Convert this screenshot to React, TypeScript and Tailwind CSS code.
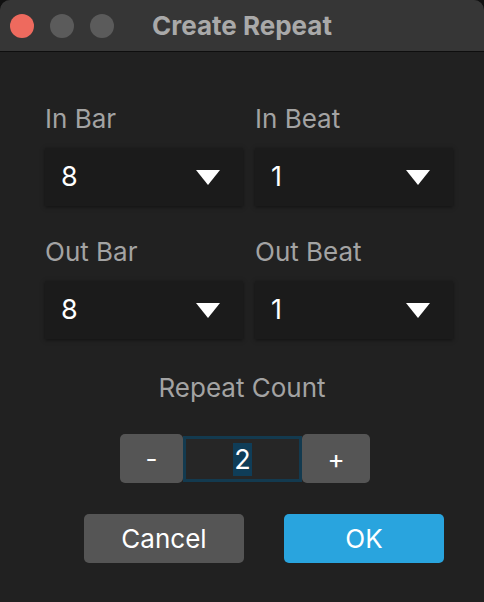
import { useState } from "react";

const font = { fontFamily: "Inter, 'Noto Sans', sans-serif" };

function Triangle() {
    return (
        <svg width="24" height="15" viewBox="0 0 24 15" className="shrink-0">
            <path d="M0 0 H24 L12 15 Z" fill="#ffffff" />
        </svg>
    );
}

function Field({ label, value }: { label: string, value: string }) {
    return (
        <div className="flex flex-col w-[198px]">
            <div className="text-[26px] leading-[30px] text-[#a3a3a3]">{label}</div>
            <div className="mt-[14px] h-[58px] bg-[#1b1b1b] shadow-[0_1px_4px_rgba(0,0,0,0.5)] flex items-center justify-between pl-[16px] pr-[23px]">
                <span className="text-[27px] text-white">{value}</span>
                <Triangle />
            </div>
        </div>
    );
}

export default function App() {
    const [count, setCount] = useState(2);

    return (
        <div className="w-[484px] h-[602px] bg-[#111] overflow-hidden" style={font}>
            <div className="w-full h-full bg-[#212121] rounded-t-[10px] overflow-hidden flex flex-col">
                <div className="h-[52px] bg-[#363636] border-b border-[#0e0e0e] flex items-center shrink-0">
                    <div className="flex items-center gap-[16px] pl-[10px]">
                        <span className="w-[24px] h-[24px] rounded-full bg-[#ee6a5e]" />
                        <span className="w-[24px] h-[24px] rounded-full bg-[#5b5b5b]" />
                        <span className="w-[24px] h-[24px] rounded-full bg-[#5b5b5b]" />
                    </div>
                    <div className="ml-[38px] text-[26px] font-bold text-[#a9a9a9]">Create Repeat</div>
                </div>

                <div className="flex flex-col pl-[45px] pt-[52px]">
                    <div className="flex gap-[12px]">
                        <Field label="In Bar" value="8" />
                        <Field label="In Beat" value="1" />
                    </div>
                    <div className="flex gap-[12px] mt-[31px]">
                        <Field label="Out Bar" value="8" />
                        <Field label="Out Beat" value="1" />
                    </div>
                </div>

                <div className="mt-[34px] text-center text-[26px] leading-[30px] text-[#a3a3a3]">Repeat Count</div>

                <div className="mt-[31px] flex justify-center pl-[6px]">
                    <button
                        className="w-[63px] h-[49px] rounded-[5px] bg-[#555555] text-white text-[26px]"
                        onClick={() => setCount(Math.max(1, count - 1))}
                    >
                        -
                    </button>
                    <div className="w-[119px] h-[46px] mt-[2px] border-[3px] border-[#133a4f] bg-[#262626] flex items-center justify-center">
                        <span className="text-[27px] leading-[33px] text-white bg-[#0f3d58] px-[1px]">{count}</span>
                    </div>
                    <button
                        className="w-[68px] h-[49px] rounded-[5px] bg-[#555555] text-white text-[26px]"
                        onClick={() => setCount(count + 1)}
                    >
                        +
                    </button>
                </div>

                <div className="mt-[31px] flex gap-[40px] pl-[84px]">
                    <button className="w-[160px] h-[49px] rounded-[5px] bg-[#555555] text-white text-[26px]">Cancel</button>
                    <button className="w-[160px] h-[49px] rounded-[5px] bg-[#29a4de] text-white text-[26px]">OK</button>
                </div>
            </div>
        </div>
    );
}
